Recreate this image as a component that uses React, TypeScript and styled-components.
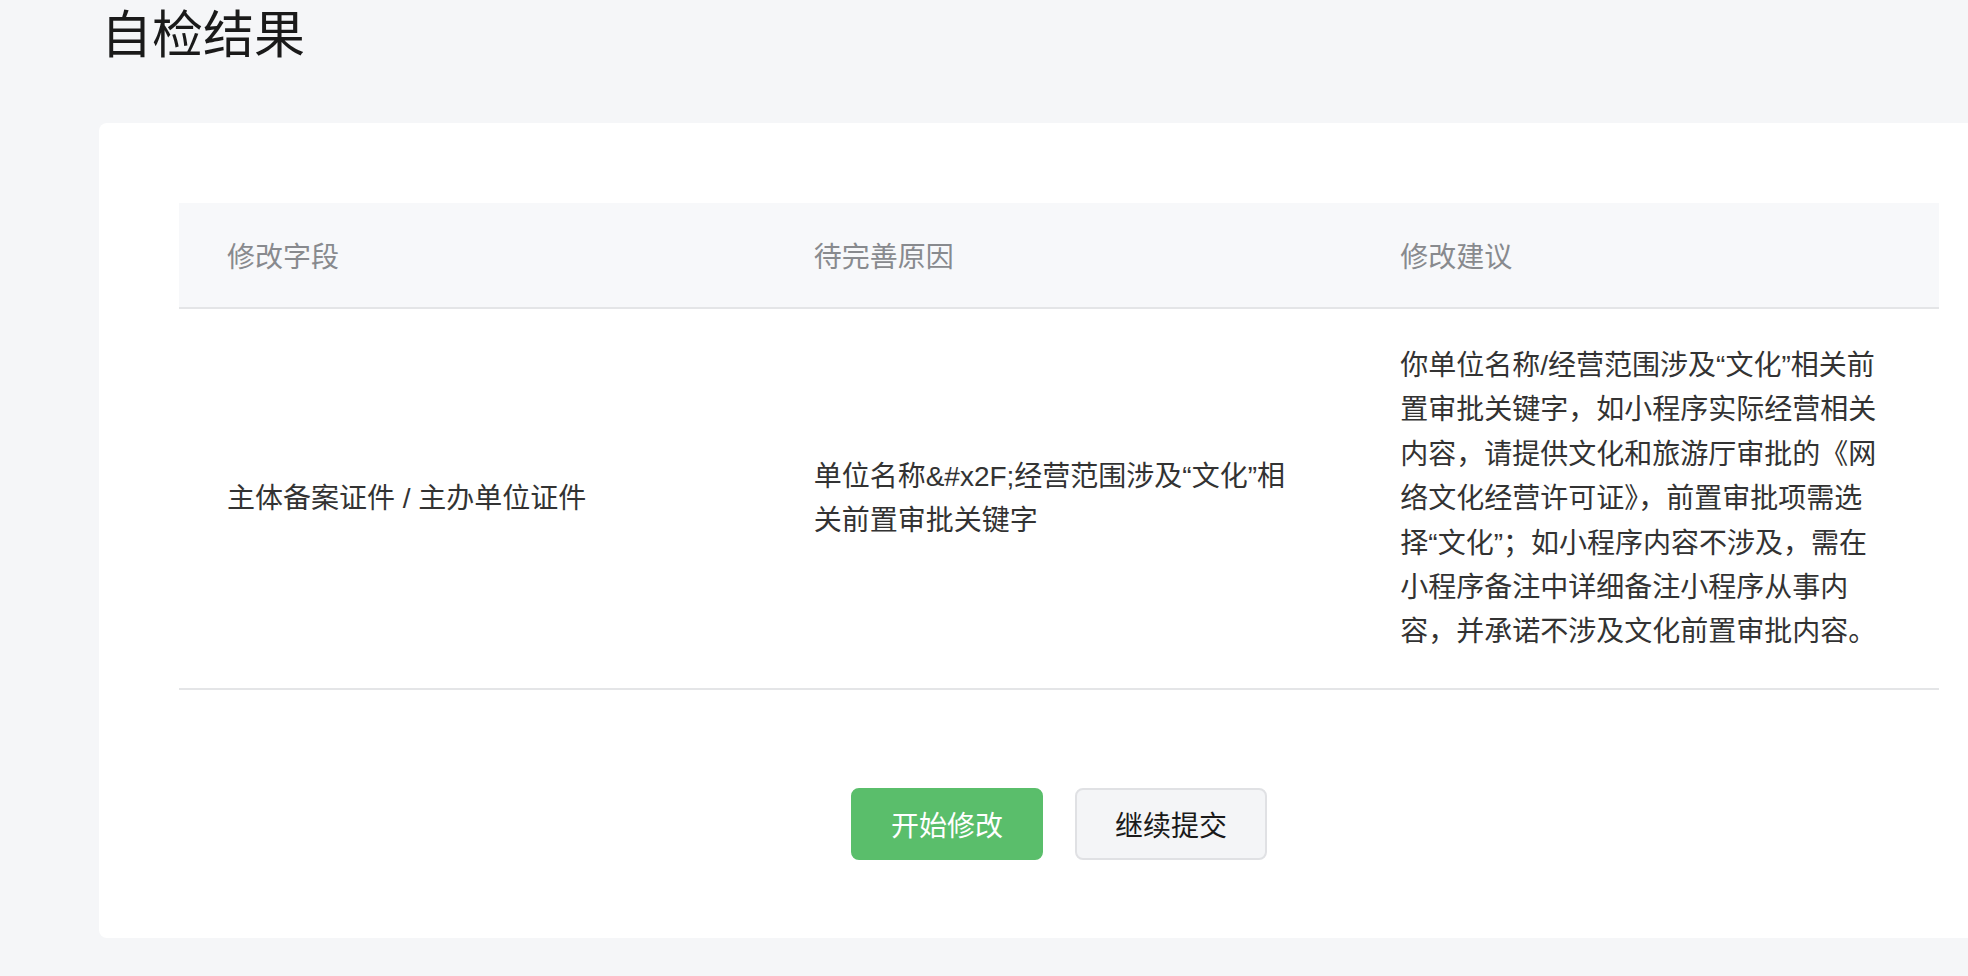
import React from 'react';
import styled, { createGlobalStyle } from 'styled-components';

const colors = {
  page: '#f5f6f8',
  white: '#ffffff',
  headBg: '#f7f8fa',
  line: '#e4e5e7',
  text: '#333333',
  title: '#1a1a1a',
  muted: '#888a8e',
  green: '#5abe6b',
  ghost: '#f4f5f7',
  ghostBorder: '#e0e1e4',
};

const GlobalStyle = createGlobalStyle`
  html, body {
    margin: 0;
    padding: 0;
    background: ${colors.page};
    overflow: hidden;
  }
  body {
    font-family: "Liberation Sans", "Noto Sans CJK SC", sans-serif;
    color: ${colors.text};
  }
`;

const Page = styled.div`
  width: 1968px;
  height: 976px;
  padding-left: 99px;
  box-sizing: border-box;
  background: ${colors.page};
`;

const Title = styled.h1`
  margin: 0 0 51px 2px;
  height: 72px;
  line-height: 72px;
  font-size: 51px;
  font-weight: 400;
  color: ${colors.title};
`;

const Card = styled.div`
  width: 1920px;
  box-sizing: border-box;
  padding: 80px 80px 78px;
  background: ${colors.white};
  border-radius: 8px;
`;

const Table = styled.table`
  width: 1760px;
  table-layout: fixed;
  border-collapse: collapse;
`;

const HeadCell = styled.th`
  height: 104px;
  padding: 0 48px;
  text-align: left;
  font-size: 28px;
  font-weight: 400;
  color: ${colors.muted};
  background: ${colors.headBg};
  border-bottom: 2px solid ${colors.line};
`;

const Cell = styled.td`
  padding: 35px 48px 33px;
  vertical-align: middle;
  font-size: 28px;
  line-height: 44.4px;
  color: ${colors.text};
  border-bottom: 2px solid ${colors.line};
  word-break: break-all;
`;

const Actions = styled.div`
  display: flex;
  justify-content: center;
  gap: 32px;
  margin-top: 98px;
`;

const Button = styled.button<{ $primary?: boolean }>`
  width: 192px;
  height: 72px;
  box-sizing: border-box;
  border-radius: 8px;
  font-family: inherit;
  font-size: 28px;
  cursor: pointer;
  color: ${p => (p.$primary ? colors.white : colors.title)};
  background: ${p => (p.$primary ? colors.green : colors.ghost)};
  border: 2px solid ${p => (p.$primary ? colors.green : colors.ghostBorder)};
`;

const rows = [
  {
    field: '主体备案证件 / 主办单位证件',
    reason: '单位名称&#x2F;经营范围涉及“文化”相关前置审批关键字',
    advice:
      '你单位名称/经营范围涉及“文化”相关前置审批关键字，如小程序实际经营相关内容，请提供文化和旅游厅审批的《网络文化经营许可证》，前置审批项需选择“文化”；如小程序内容不涉及，需在小程序备注中详细备注小程序从事内容，并承诺不涉及文化前置审批内容。',
  },
];

export default function App() {
  return (
    <Page>
      <GlobalStyle />
      <Title>自检结果</Title>
      <Card>
        <Table>
          <thead>
            <tr>
              <HeadCell>修改字段</HeadCell>
              <HeadCell>待完善原因</HeadCell>
              <HeadCell>修改建议</HeadCell>
            </tr>
          </thead>
          <tbody>
            {rows.map((row, index) => (
              <tr key={index}>
                <Cell>{row.field}</Cell>
                <Cell>{row.reason}</Cell>
                <Cell>{row.advice}</Cell>
              </tr>
            ))}
          </tbody>
        </Table>
        <Actions>
          <Button $primary>开始修改</Button>
          <Button>继续提交</Button>
        </Actions>
      </Card>
    </Page>
  );
}
